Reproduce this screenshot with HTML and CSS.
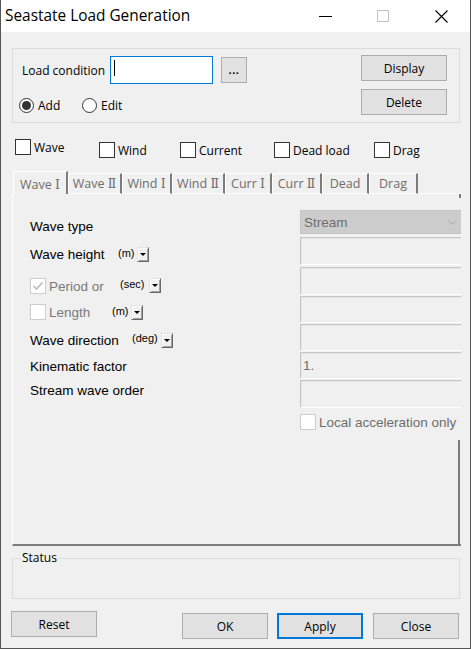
FILE: index.html
```html
<!DOCTYPE html>
<html>
<head>
<meta charset="utf-8">
<link rel="stylesheet" href="styles.css">
</head>
<body>
<div class="window">
  <div class="titlebar">
    <div class="title">Seastate Load Generation</div>
    <div class="controls">
      <div class="ctl"><svg width="13" height="13" viewBox="0 0 13 13"><line x1="0" y1="6.5" x2="13" y2="6.5" stroke="#000" stroke-width="1"/></svg></div>
      <div class="ctl"><svg width="12" height="12" viewBox="0 0 12 12"><rect x="0.5" y="0.5" width="11" height="11" fill="none" stroke="#c4c4c4" stroke-width="1"/></svg></div>
      <div class="ctl"><svg width="13" height="13" viewBox="0 0 13 13"><path d="M0.5 0.5 L12.5 12.5 M12.5 0.5 L0.5 12.5" stroke="#000" stroke-width="1.1" fill="none"/></svg></div>
    </div>
  </div>
  <div class="body">
    <div class="group top-group">
      <div class="tg-left">
        <div class="lc-row">
          <span class="lc-label">Load condition</span>
          <div class="input focused"><span class="caret"></span></div>
          <div class="btn dots">...</div>
        </div>
        <div class="radio-row">
          <div class="radio first"><span class="rb checked"></span><span>Add</span></div>
          <div class="radio"><span class="rb"></span><span>Edit</span></div>
        </div>
      </div>
      <div class="tg-right">
        <div class="btn act">Display</div>
        <div class="btn act">Delete</div>
      </div>
    </div>

    <div class="checks">
      <div class="chk c-wave"><span class="cb"></span><span>Wave</span></div>
      <div class="chk c-wind"><span class="cb"></span><span>Wind</span></div>
      <div class="chk c-curr"><span class="cb"></span><span>Current</span></div>
      <div class="chk c-dead"><span class="cb"></span><span>Dead load</span></div>
      <div class="chk c-drag"><span class="cb"></span><span>Drag</span></div>
    </div>

    <div class="tabs">
      <div class="tab sel">Wave <span class="num">Ⅰ</span></div>
      <div class="tab">Wave <span class="num">Ⅱ</span></div>
      <div class="tab">Wind <span class="num">Ⅰ</span></div>
      <div class="tab">Wind <span class="num">Ⅱ</span></div>
      <div class="tab">Curr <span class="num">Ⅰ</span></div>
      <div class="tab">Curr <span class="num">Ⅱ</span></div>
      <div class="tab">Dead</div>
      <div class="tab">Drag</div>
      <div class="tab-fill"></div>
    </div>

    <div class="panel">
      <div class="labels">
        <div class="row r1"><span>Wave type</span></div>
        <div class="row r2"><span class="l-wh">Wave height</span><span class="unit u-m1">(m)</span><span class="dd"></span></div>
        <div class="row r3"><span class="cb dis checked"><svg width="14" height="14" viewBox="0 0 14 14"><path d="M2.5 7 L5.5 10 L11.5 3.5" stroke="#b4b4b4" stroke-width="1.4" fill="none"/></svg></span><span class="gray l-per">Period or</span><span class="unit u-sec">(sec)</span><span class="dd"></span></div>
        <div class="row r4"><span class="cb dis"></span><span class="gray l-len">Length</span><span class="unit u-m2">(m)</span><span class="dd"></span></div>
        <div class="row r5"><span class="l-dir">Wave direction</span><span class="unit u-deg">(deg)</span><span class="dd"></span></div>
        <div class="row r6"><span>Kinematic factor</span></div>
        <div class="row r7"><span>Stream wave order</span></div>
      </div>
      <div class="fields">
        <div class="combo"><span>Stream</span><svg class="chev" width="9" height="5" viewBox="0 0 9 5"><path d="M0.5 0.5 L4.5 4.5 L8.5 0.5" stroke="#a8a8a8" stroke-width="1" fill="none"/></svg></div>
        <div class="box"></div>
        <div class="box"></div>
        <div class="box"></div>
        <div class="box"></div>
        <div class="box"><span>1.</span></div>
        <div class="box"></div>
        <div class="local"><span class="cb dis"></span><span>Local acceleration only</span></div>
      </div>
    </div>

    <fieldset class="status">
      <legend>Status</legend>
    </fieldset>

    <div class="footer">
      <div class="btn act reset">Reset</div>
      <div class="footer-right">
        <div class="btn act">OK</div>
        <div class="btn act default">Apply</div>
        <div class="btn act">Close</div>
      </div>
    </div>
  </div>
</div>
</body>
</html>
```

FILE: styles.css
```css
html, body {
  margin: 0;
  padding: 0;
  background: #f0f0f0;
}

.window {
  width: 471px;
  height: 649px;
  box-sizing: border-box;
  border: 1px solid #555;
  border-top: none;
  background: #f0f0f0;
  font-family: "Open Sans", "Noto Sans", sans-serif;
  font-size: 12px;
  color: #000;
  overflow: hidden;
}

/* Title bar */
.titlebar {
  height: 32px;
  background: #fff;
  display: flex;
  align-items: center;
}
.title {
  flex: 1;
  padding-left: 4px;
  font-size: 15.4px;
  line-height: 20px;
}
.controls {
  display: flex;
  height: 32px;
}
.ctl {
  width: 58px;
  display: flex;
  align-items: center;
  justify-content: center;
}
.ctl svg { display: block; }

.body {
  display: flex;
  flex-direction: column;
}

/* Top group */
.group {
  border: 1px solid #dcdcdc;
}
.top-group {
  margin: 16px 0 0 11px;
  width: 448px;
  height: 75px;
  box-sizing: border-box;
  display: flex;
  justify-content: space-between;
}
.tg-left {
  padding: 7px 0 0 6px;
}
.lc-row {
  display: flex;
  align-items: center;
  height: 28px;
}
.lc-label {
  width: 88px;
  margin-left: 3px;
  margin-top: 1px;
}
.input {
  width: 103px;
  height: 28px;
  box-sizing: border-box;
  background: #fff;
  border: 1px solid #7a7a7a;
  display: flex;
  align-items: center;
  padding-left: 3px;
}
.input.focused { border-color: #0078d7; }
.caret {
  width: 1px;
  height: 16px;
  background: #000;
  margin-top: -4px;
}
.btn {
  background: #e1e1e1;
  border: 1px solid #adadad;
  box-sizing: border-box;
  display: flex;
  align-items: center;
  justify-content: center;
}
.dots {
  width: 26px;
  height: 26px;
  margin-left: 8px;
  font-weight: bold;
  letter-spacing: 0.5px;
  font-size: 11px;
  padding-bottom: 2px;
}
.act {
  width: 86px;
  height: 26px;
}
.tg-right {
  padding: 6px 12px 0 0;
  display: flex;
  flex-direction: column;
  gap: 8px;
}

.radio-row {
  display: flex;
  margin-top: 13px;
  height: 16px;
  align-items: center;
}
.radio {
  display: flex;
  align-items: center;
  gap: 4px;
}
.radio.first { width: 63px; }
.rb {
  width: 15px;
  height: 15px;
  box-sizing: border-box;
  border: 1px solid #333;
  border-radius: 50%;
  background: #fff;
  display: flex;
  align-items: center;
  justify-content: center;
}
.rb.checked::after {
  content: "";
  width: 9px;
  height: 9px;
  border-radius: 50%;
  background: #333;
}

/* Checkbox row */
.checks {
  display: flex;
  margin: 16px 0 0 14px;
  height: 20px;
}
.chk {
  display: flex;
  align-items: center;
  gap: 3px;
  height: 16px;
}
.cb {
  width: 16px;
  height: 16px;
  box-sizing: border-box;
  border: 1px solid #333;
  background: #fff;
  flex: none;
  display: flex;
  align-items: center;
  justify-content: center;
}
.c-wave { width: 84px; margin-top: 0; }
.c-wind { width: 81px; margin-top: 3px; }
.c-curr { width: 94px; margin-top: 3px; }
.c-dead { width: 100px; margin-top: 3px; }
.c-drag { margin-top: 3px; }

/* Tabs */
.tabs {
  display: flex;
  margin: 12px 0 0 12px;
  height: 23px;
  width: 449px;
}
.tab {
  box-sizing: border-box;
  margin-top: 2px;
  height: 21px;
  border-top: 1px solid #fff;
  border-left: 1px solid #fff;
  border-right: 2px solid #7c7c7c;
  border-bottom: 1px solid #fff;
  color: #6d6d6d;
  font-size: 12.5px;
  display: flex;
  align-items: center;
  justify-content: center;
  padding-bottom: 1px;
  white-space: pre;
}
.num {
  font-family: "DejaVu Serif", "DejaVu Sans", serif;
  font-size: 12.5px;
}
.tab.sel {
  margin-top: 0;
  height: 23px;
  border-bottom: none;
  padding-bottom: 0;
  padding-top: 2px;
}
.tab:nth-child(1) { width: 55px; }
.tab:nth-child(2) { width: 54px; }
.tab:nth-child(3) { width: 50px; }
.tab:nth-child(4) { width: 53px; }
.tab:nth-child(5) { width: 47px; }
.tab:nth-child(6) { width: 50px; }
.tab:nth-child(7) { width: 47px; }
.tab:nth-child(8) { width: 49px; }
.tab-fill {
  flex: 1;
  border-bottom: 1px solid #fff;
  position: relative;
}
.tab-fill::after {
  content: "";
  position: absolute;
  right: 1px;
  bottom: -5px;
  width: 2px;
  height: 4px;
  background: #7c7c7c;
}

/* Panel */
.panel {
  margin-left: 11px;
  width: 449px;
  height: 352px;
  box-sizing: border-box;
  border-left: 1px solid #fff;
  border-bottom: 2px solid #7c7c7c;
  padding-top: 16px;
  display: flex;
  overflow: hidden;
  position: relative;
  font-family: "Liberation Sans", Arial, sans-serif;
  font-size: 13.5px;
}
.panel::after {
  content: "";
  position: absolute;
  right: 1px;
  bottom: 0;
  width: 2px;
  height: 104px;
  background: #7c7c7c;
}
.labels {
  width: 270px;
  padding-left: 17px;
  flex: none;
}
.row {
  height: 16px;
  display: flex;
  align-items: center;
  white-space: nowrap;
}
.r1 { margin-top: 8px; }
.r2 { margin-top: 12px; }
.r3 { margin-top: 16px; }
.r4 { margin-top: 10px; }
.r5 { margin-top: 12px; }
.r6 { margin-top: 10px; }
.r7 { margin-top: 8px; }
.gray { color: #7a7a7a; }
.cb.dis { border-color: #cccccc; margin-right: 3px; }
.l-wh { width: 88px; }
.l-per { width: 71px; }
.l-len { width: 63px; }
.l-dir { width: 102px; }
.unit {
  font-size: 11px;
  margin-top: -3px;
}
.u-m1 { width: 19px; }
.u-sec { width: 29px; margin-top: -5px; }
.u-m2 { width: 19px; }
.u-deg { width: 29px; margin-top: -4px; }
.dd {
  width: 12px;
  height: 15px;
  box-sizing: border-box;
  background: #f0f0f0;
  border-top: 1px solid #e3e3e3;
  border-left: 1px solid #e3e3e3;
  border-right: 1px solid #696969;
  border-bottom: 1px solid #696969;
  box-shadow: inset 1px 1px #fff, inset -1px -1px #a0a0a0;
  display: flex;
  align-items: center;
  justify-content: center;
}
.dd::after {
  content: "";
  border-left: 3px solid transparent;
  border-right: 3px solid transparent;
  border-top: 3px solid #000;
  margin-top: 1px;
}
.r3 .dd { margin-top: -2px; }

.fields {
  width: 170px;
  flex: none;
  color: #6d6d6d;
}
.combo {
  width: 162px;
  height: 24px;
  box-sizing: border-box;
  background: #cccccc;
  border: 1px solid #c4c4c4;
  display: flex;
  align-items: center;
  justify-content: space-between;
  padding: 0 4px 0 3px;
}
.chev { display: block; }
.box {
  width: 170px;
  box-sizing: border-box;
  border-top: 1px solid #c6c6c6;
  border-left: 1px solid #c6c6c6;
  border-bottom: 1px solid #fff;
  border-right: 1px solid #fff;
  box-shadow: inset 1px 1px #e6e6e6;
  display: flex;
  align-items: center;
  padding-left: 2px;
}
.box:nth-child(2) { height: 28px; margin-top: 3px; }
.box:nth-child(3) { height: 28px; margin-top: 2px; }
.box:nth-child(4) { height: 27px; margin-top: 1px; }
.box:nth-child(5) { height: 27px; margin-top: 1px; }
.box:nth-child(6) { height: 27px; margin-top: 1px; }
.box:nth-child(7) { height: 28px; margin-top: 1px; }
.local {
  margin-top: 6px;
  display: flex;
  align-items: center;
  height: 16px;
  white-space: nowrap;
}
.local .cb { margin-right: 3px; }

/* Status */
.status {
  margin: 4px 0 0 11px;
  padding: 0;
  width: 448px;
  height: 49px;
  box-sizing: border-box;
  border: 1px solid #dcdcdc;
  min-width: 0;
}
.status legend {
  margin-left: 8px;
  padding: 0 1px;
  line-height: 16px;
  font-size: 12px;
}

/* Footer */
.footer {
  display: flex;
  margin: 12px 0 0 10px;
  width: 448px;
  justify-content: space-between;
}
.footer-right {
  display: flex;
  gap: 9px;
  margin-top: 2px;
}
.footer-right .btn:last-child { margin-left: 1px; }
.default {
  border: 2px solid #0078d7;
}
```
